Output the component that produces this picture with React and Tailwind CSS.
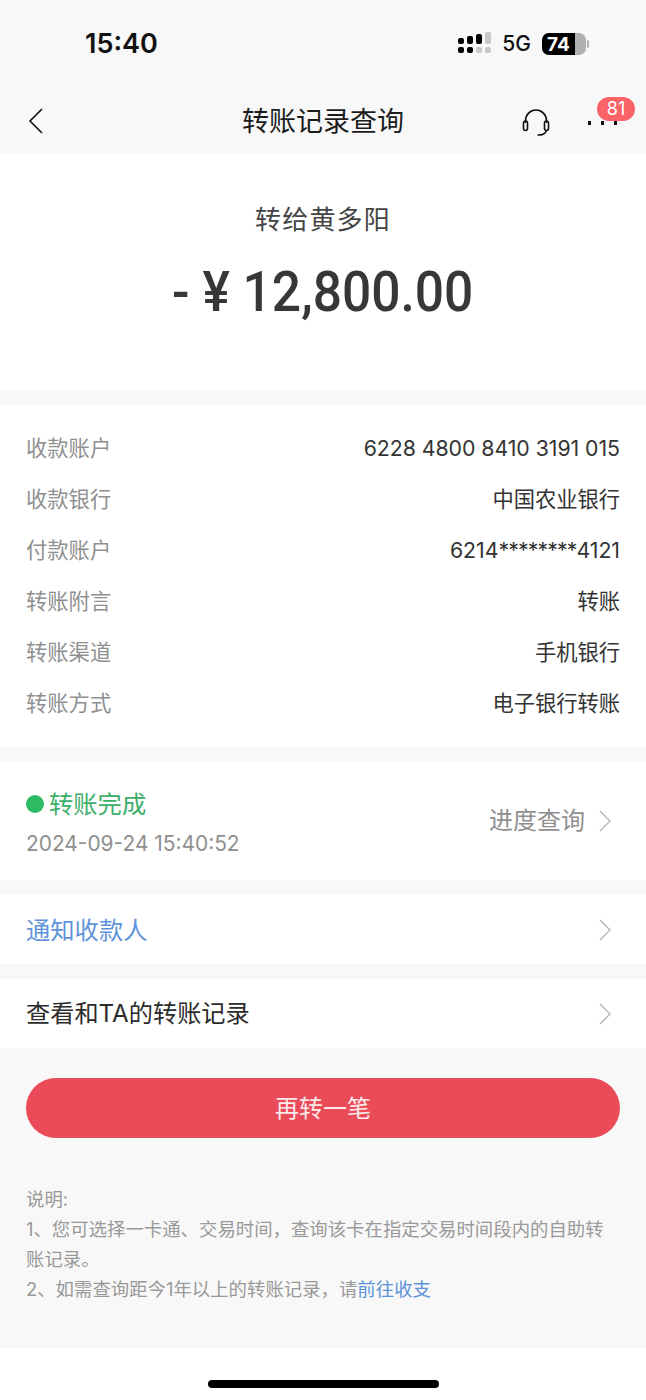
import React from 'react';

const cjk = { fontFamily: '"Inter", "Noto Sans CJK SC", sans-serif' };

const details = [
  { label: '收款账户', value: '6228 4800 8410 3191 015' },
  { label: '收款银行', value: '中国农业银行' },
  { label: '付款账户', value: <>6214<span className="tracking-[-0.9px]">********</span>4121</> },
  { label: '转账附言', value: '转账' },
  { label: '转账渠道', value: '手机银行' },
  { label: '转账方式', value: '电子银行转账' },
];

const Chevron = () => (
  <svg width="14" height="24" viewBox="0 0 14 24" fill="none" stroke="#b5b5b5" strokeWidth="1.4" className="shrink-0">
    <path d="M2 2 L12 12 L2 22" />
  </svg>
);

const SignalIcon = () => (
  <svg width="33" height="24" viewBox="0 0 33 24" className="shrink-0">
    <g fill="#000">
      <rect x="0" y="6" width="6" height="6" rx="2" />
      <rect x="0" y="15" width="6" height="6" rx="2" />
      <rect x="9" y="4" width="6" height="8" rx="2" />
      <rect x="9" y="15" width="6" height="6" rx="2" />
      <rect x="18" y="2" width="6" height="10" rx="2" />
    </g>
    <g fill="#c8c8c8">
      <rect x="18" y="15" width="6" height="6" rx="2" />
      <rect x="27" y="0" width="6" height="12" rx="2" />
      <rect x="27" y="15" width="6" height="6" rx="2" />
    </g>
  </svg>
);

const Headset = () => (
  <svg width="28" height="28" viewBox="0 0 28 28" fill="none" stroke="#111" strokeWidth="1.6">
    <path d="M3.5 14 V11.5 a10.5 10.5 0 0 1 21 0 V14" />
    <rect x="1.5" y="12" width="4" height="9.5" rx="2" />
    <rect x="22.5" y="12" width="4" height="9.5" rx="2" />
    <path d="M24.5 21.5 a8 5 0 0 1 -9 4.5" />
  </svg>
);

const Gap = () => <div className="h-[15px] bg-[#f8f8f8]" />;

export default function App() {
  return (
    <div className="relative w-[646px] h-[1400px] bg-white overflow-hidden" style={cjk}>
      {/* 状态栏 */}
      <div className="h-[88px] bg-[#f8f8f8] flex items-start justify-between pt-[27px] pl-[85px] pr-[57px]">
        <span className="text-[27px] leading-[34px] font-semibold text-[#111]">15:40</span>
        <div className="flex items-center gap-[11px] h-[34px]">
          <SignalIcon />
          <span className="text-[21px] font-medium text-[#111]">5G</span>
          <div className="flex items-center">
            <div className="w-[44px] h-[22px] rounded-[7px] overflow-hidden bg-[#b0b0b0] relative">
              <div className="w-[33px] h-full bg-black flex items-center justify-center">
                <span className="text-[19px] leading-none font-bold text-white">74</span>
              </div>
            </div>
            <div className="w-[2px] h-[8px] ml-[1px] bg-[#b0b0b0] rounded-r-sm" />
          </div>
        </div>
      </div>

      {/* 导航栏 */}
      <div className="relative h-[66px] bg-[#f8f8f8] flex items-center justify-between pl-[28px] pr-[31px]">
        <svg width="16" height="28" viewBox="0 0 16 28" fill="none" stroke="#111" strokeWidth="1.6">
          <path d="M14 2 L2 14 L14 26" />
        </svg>
        <span className="absolute left-0 right-0 top-[16px] text-center text-[27px] leading-[36px] text-[#1c1c1c]">转账记录查询</span>
        <div className="relative flex items-center gap-[38px] mt-[3px]">
          <Headset />
          <div className="flex gap-[10px] w-[27px] mt-[1px]">
            <span className="w-[3px] h-[4px] bg-[#111] shrink-0" />
            <span className="w-[3px] h-[4px] bg-[#111] shrink-0" />
            <span className="w-[3px] h-[4px] bg-[#111] shrink-0" />
          </div>
          <span className="absolute right-[-20px] top-[-12px] w-[38px] h-[24px] rounded-full bg-[#fa6468] text-white text-[18px] leading-[24px] text-center">81</span>
        </div>
      </div>

      {/* 金额 */}
      <div className="h-[236px] bg-white flex flex-col items-center pt-[48px]">
        <div className="text-[26px] leading-[36px] tracking-[1.2px] text-[#444]">转给黄多阳</div>
        <div className="mt-[23px] text-[56px] leading-[62px] font-medium text-[#373737] scale-x-[0.92]" style={{ fontFamily: '"Roboto", "Noto Sans CJK SC", sans-serif' }}>- ¥ 12,800.00</div>
      </div>
      <Gap />

      {/* 明细 */}
      <div className="h-[342px] bg-white px-[26px] pt-[18px] flex flex-col">
        {details.map((d) => (
          <div key={d.label} className="h-[51px] flex items-center justify-between text-[21.3px]">
            <span className="text-[#8f8f8f]">{d.label}</span>
            <span className="text-[#333] tracking-[-0.05px]">{d.value}</span>
          </div>
        ))}
      </div>
      <Gap />

      {/* 状态 */}
      <div className="h-[118px] bg-white pl-[26px] pr-[34px] flex items-center justify-between">
        <div className="flex flex-col pt-[5px]">
          <div className="flex items-center gap-[5px]">
            <span className="w-[18px] h-[18px] rounded-full bg-[#2dbb64]" />
            <span className="text-[24.3px] leading-[34px] text-[#3cae69]">转账完成</span>
          </div>
          <div className="mt-[7px] text-[20.9px] leading-[32px] text-[#8f8f8f]">2024-09-24 15:40:52</div>
        </div>
        <div className="flex items-center gap-[13px]">
          <span className="text-[24px] text-[#8f8f8f]">进度查询</span>
          <Chevron />
        </div>
      </div>
      <Gap />

      <div className="h-[69px] bg-white pl-[26px] pr-[34px] flex items-center justify-between">
        <span className="text-[24.3px] pt-[1px] text-[#5e93da]">通知收款人</span>
        <Chevron />
      </div>
      <Gap />

      <div className="h-[69px] bg-white pl-[26px] pr-[34px] flex items-center justify-between">
        <span className="text-[24.2px] pt-[1px] text-[#2b2b2b]">查看和TA的转账记录</span>
        <Chevron />
      </div>

      {/* 底部 */}
      <div className="h-[300px] bg-[#f8f8f8] px-[26px] pt-[30px]">
        <div className="h-[60px] rounded-full bg-[#e94b58] flex items-center justify-center text-[24px] pt-[2px] text-[#fbe9ea]">再转一笔</div>
        <div className="mt-[46px] text-[18.4px] leading-[30px] text-[#999]">
          <div>说明:</div>
          <div>1、您可选择一卡通、交易时间，查询该卡在指定交易时间段内的自助转账记录。</div>
          <div>2、如需查询距今1年以上的转账记录，请<span className="text-[#5e93da]">前往收支</span></div>
        </div>
      </div>

      {/* Home 指示条 */}
      <div className="h-[52px] bg-white flex justify-center pt-[32px]">
        <div className="w-[231px] h-[8px] rounded-full bg-black" />
      </div>
    </div>
  );
}
